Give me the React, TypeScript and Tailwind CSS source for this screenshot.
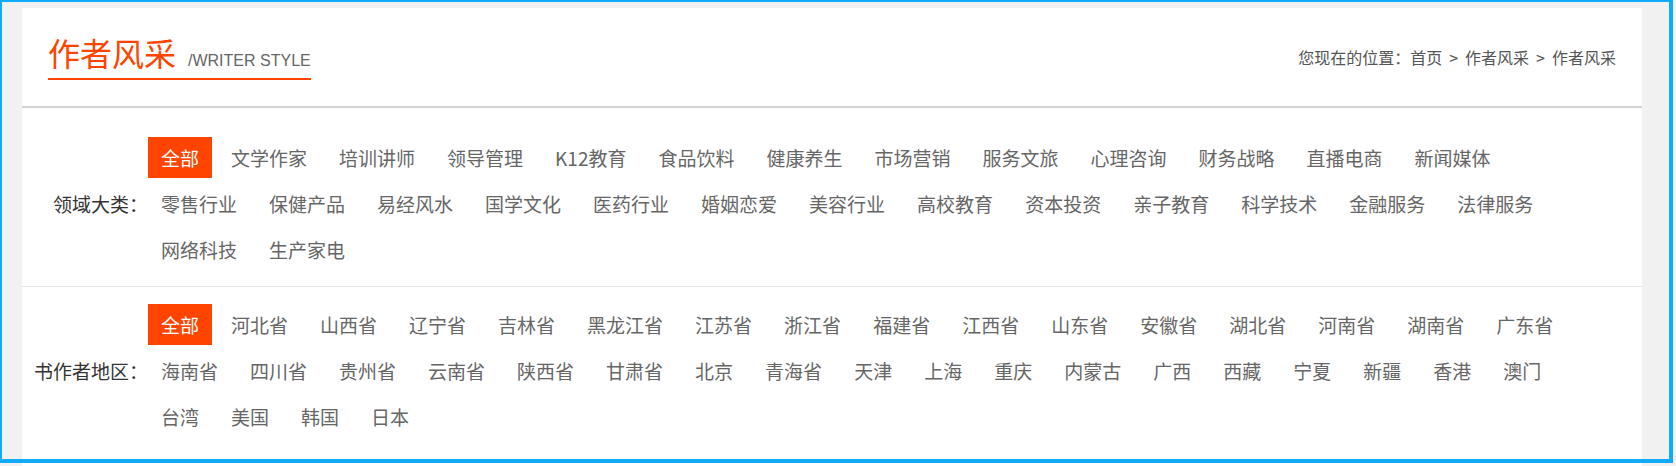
import React, { useState } from 'react';

const fields = [
  '全部',
  '文学作家',
  '培训讲师',
  '领导管理',
  'K12教育',
  '食品饮料',
  '健康养生',
  '市场营销',
  '服务文旅',
  '心理咨询',
  '财务战略',
  '直播电商',
  '新闻媒体',
  '零售行业',
  '保健产品',
  '易经风水',
  '国学文化',
  '医药行业',
  '婚姻恋爱',
  '美容行业',
  '高校教育',
  '资本投资',
  '亲子教育',
  '科学技术',
  '金融服务',
  '法律服务',
  '网络科技',
  '生产家电'
];

const regions = [
  '全部',
  '河北省',
  '山西省',
  '辽宁省',
  '吉林省',
  '黑龙江省',
  '江苏省',
  '浙江省',
  '福建省',
  '江西省',
  '山东省',
  '安徽省',
  '湖北省',
  '河南省',
  '湖南省',
  '广东省',
  '海南省',
  '四川省',
  '贵州省',
  '云南省',
  '陕西省',
  '甘肃省',
  '北京',
  '青海省',
  '天津',
  '上海',
  '重庆',
  '内蒙古',
  '广西',
  '西藏',
  '宁夏',
  '新疆',
  '香港',
  '澳门',
  '台湾',
  '美国',
  '韩国',
  '日本'
];

function FilterRow({
  label,
  items,
  active,
  onPick,
  className
}: {
  label: string;
  items: string[];
  active: string;
  onPick: (v: string) => void;
  className: string;
}) {
  return (
    <div className={`flex items-center ${className}`}>
      <div className="w-[126px] shrink-0 text-right text-[19px] leading-[41px] text-[#333]">{label}：</div>
      <ul className="flex w-[1444px] flex-wrap gap-x-[6px] gap-y-[5px]">
        {items.map((item) => (
          <li key={item}>
            <button
              onClick={() => onPick(item)}
              className={`h-[41px] px-[13px] text-[19px] leading-[41px] ${
                active === item ? 'bg-[#ff4400] text-white' : 'text-[#666]'
              }`}
            >
              {item}
            </button>
          </li>
        ))}
      </ul>
    </div>
  );
}

export default function App() {
  const [field, setField] = useState('全部');
  const [region, setRegion] = useState('全部');

  return (
    <div className="relative h-[466px] w-[1676px] overflow-hidden bg-[#f1f1f1] font-['Microsoft_YaHei','Noto_Sans_CJK_SC',sans-serif]">
      <div className="ml-[22px] mt-[8px] h-[458px] w-[1620px] bg-white">
        <div className="flex items-center justify-between border-b-2 border-[#d2d2d2] px-[26px] pb-[26px] pt-[24px]">
          <div className="flex items-baseline border-b-2 border-[#ff4400] pb-[5px]">
            <h1 className="text-[32px] font-normal leading-[40px] text-[#ff4400]">作者风采</h1>
            <span className="ml-[12px] font-['Liberation_Sans',Arial,sans-serif] text-[16px] text-[#666]">
              /WRITER STYLE
            </span>
          </div>
          <div className="mt-[2px] text-[16px] leading-[24px] text-[#555]">
            您现在的位置：<a href="#">首页</a>
            <span className="mx-[7px]">&gt;</span>
            <a href="#">作者风采</a>
            <span className="mx-[7px]">&gt;</span>
            <span>作者风采</span>
          </div>
        </div>

        <FilterRow
          label="领域大类"
          items={fields}
          active={field}
          onPick={setField}
          className="border-b border-[#e6e6e6] pb-[16px] pt-[29px]"
        />
        <FilterRow label="书作者地区" items={regions} active={region} onPick={setRegion} className="pt-[17px]" />
      </div>

      {/* selection frame */}
      <div className="pointer-events-none absolute left-0 top-0 h-[463px] w-[1673px] border-b-[4px] border-l-[2px] border-r-[4px] border-t-[2px] border-[#10aaff]" />
    </div>
  );
}
